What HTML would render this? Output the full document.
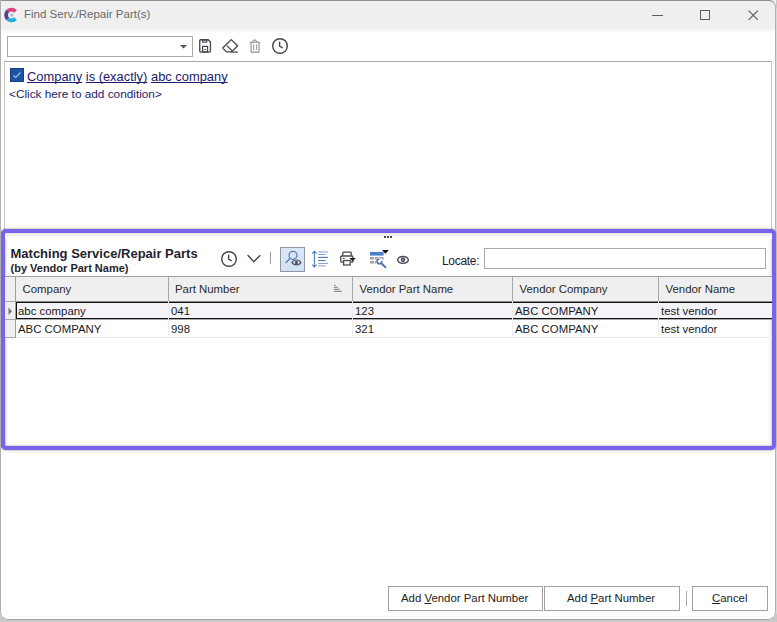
<!DOCTYPE html>
<html><head><meta charset="utf-8">
<style>
*{margin:0;padding:0;box-sizing:border-box}
html,body{width:777px;height:622px;overflow:hidden;background:#c9c9c9;font-family:"Liberation Sans",sans-serif;}
.a{position:absolute}
#win{position:absolute;left:0;top:0;width:777px;height:622px;overflow:hidden}
#frame{position:absolute;left:0;top:0;width:776px;height:620px;background:#fff;border-radius:0 7px 8px 8px}
#frameb{position:absolute;left:0;top:0;width:776px;height:620px;border:1px solid #b0b0b0;border-top-color:#8c8c8c;border-bottom-color:#a6a6a6;border-radius:0 7px 8px 8px;z-index:50;pointer-events:none}
#title{left:0;top:0;width:776px;height:30px;background:#efefef}
.txt{white-space:nowrap;line-height:1}
</style></head><body>
<div id="win">
  <div class="a" style="left:776px;top:8px;width:1px;height:606px;background:#dadada"></div>
  <div id="frame"></div>
  <div id="frameb"></div>
  <div class="a" id="title"></div>
  <div class="a" style="left:0;top:28px;width:776px;height:5px;background:linear-gradient(#efefef,#fff)"></div>
  <!-- logo -->
  <svg class="a" style="left:0;top:0" width="24" height="30" viewBox="0 0 24 30">
    <path d="M15.51 11.39 A5.4 5.4 0 0 0 7.68 11.18" fill="none" stroke="#dc3f7c" stroke-width="3.8"/>
    <path d="M7.68 11.18 A5.4 5.4 0 0 0 7.68 18.82" fill="none" stroke="#5a3e96" stroke-width="3.8"/>
    <path d="M7.68 18.82 A5.4 5.4 0 0 0 15.51 18.61" fill="none" stroke="#22b0d8" stroke-width="3.8"/>
    <circle cx="11.8" cy="15" r="1.6" fill="#b0b0b8"/>
  </svg>
  <div class="a txt" style="left:24px;top:8.5px;font-size:11.5px;color:#6a6a6a">Find Serv./Repair Part(s)</div>
  <!-- window controls -->
  <div class="a" style="left:652px;top:15px;width:11px;height:1px;background:#5e5e5e"></div>
  <div class="a" style="left:700px;top:10px;width:10px;height:10px;border:1px solid #5e5e5e"></div>
  <svg class="a" style="left:747px;top:9px" width="12" height="12" viewBox="0 0 12 12"><path d="M1.6 1.6L10.9 10.9M10.9 1.6L1.6 10.9" stroke="#5e5e5e" stroke-width="1.25"/></svg>

  <!-- toolbar -->
  <div class="a" style="left:7px;top:36px;width:186px;height:21px;border:1px solid #a9a9a9;background:#fff"></div>
  <svg class="a" style="left:180px;top:45px" width="8" height="4"><path d="M0 0H7L3.5 3.5Z" fill="#555"/></svg>
  <!-- save -->
  <svg class="a" style="left:198px;top:38px" width="14" height="16" viewBox="0 0 14 16">
    <path d="M2.8 1.75H10.2L12.45 4V12.9Q12.45 14.05 11.3 14.05H2.9Q1.75 14.05 1.75 12.9V2.8Q1.75 1.75 2.8 1.75Z" fill="none" stroke="#44424e" stroke-width="1.3"/>
    <rect x="4.6" y="2" width="4.2" height="2.1" fill="none" stroke="#44424e" stroke-width="1.1"/>
    <rect x="4.6" y="8.4" width="5" height="5.4" fill="none" stroke="#44424e" stroke-width="1.2"/>
    <rect x="6.3" y="10.9" width="1.6" height="1.1" fill="#44424e"/>
  </svg>
  <!-- eraser -->
  <svg class="a" style="left:220px;top:37px" width="20" height="18" viewBox="0 0 20 18">
    <path d="M11.3 2.6L17.6 8.8L11.6 14.9H6.6L2.7 11Z" fill="none" stroke="#44424e" stroke-width="1.3" stroke-linejoin="round"/>
    <path d="M6.8 8.6L12.3 13.9" stroke="#44424e" stroke-width="1.3"/>
    <path d="M11.4 15.1H17.9" stroke="#44424e" stroke-width="1.2"/>
  </svg>
  <!-- trash -->
  <svg class="a" style="left:249px;top:38px" width="13" height="16" viewBox="0 0 13 16">
    <path d="M0.8 4.3H11.2M3 4.1L5.6 1.8L8.6 4.1" fill="none" stroke="#a4a4a4" stroke-width="1.3"/>
    <path d="M2.1 4.5V13.4Q2.1 14.3 3 14.3H9.2Q10.1 14.3 10.1 13.4V4.5" fill="none" stroke="#a4a4a4" stroke-width="1.4"/>
    <path d="M4.6 6.3V12M7.6 6.3V12" stroke="#a4a4a4" stroke-width="1.2"/>
  </svg>
  <!-- clock -->
  <svg class="a" style="left:271px;top:37px" width="18" height="18" viewBox="0 0 18 18">
    <circle cx="9" cy="9" r="7.3" fill="none" stroke="#45434f" stroke-width="1.4"/>
    <path d="M8.6 4.8V9.2L11.8 11" fill="none" stroke="#45434f" stroke-width="1.4"/>
  </svg>

  <!-- filter panel -->
  <div class="a" style="left:4px;top:61px;width:768px;height:180px;border-top:1px solid #a8a8a8;border-left:1px solid #c6c6c6;border-right:1px solid #c6c6c6"></div>
  <div class="a" style="left:10px;top:68px;width:14px;height:14px;background:#1d54a3;border:1px solid #183f80"></div>
  <svg class="a" style="left:10px;top:68px" width="14" height="14" viewBox="0 0 14 14"><path d="M3.4 7.4L5.7 9.4L10.4 4.5" fill="none" stroke="#9ccbf6" stroke-width="1.1"/></svg>
  <div class="a txt" style="left:27px;top:70.5px;font-size:12.9px;color:#1c1b6a;text-decoration-skip-ink:none">
    <span style="text-decoration:underline;text-decoration-skip-ink:none">Company</span> <span style="text-decoration:underline;text-decoration-skip-ink:none">is (exactly)</span> <span style="text-decoration:underline;text-decoration-skip-ink:none">abc company</span>
  </div>
  <div class="a txt" style="left:9px;top:88.6px;font-size:11.8px;color:#1c1b6a">&lt;Click here to add condition&gt;</div>

  <!-- purple panel -->
  <div class="a" style="left:1px;top:229px;width:775px;height:221px;border:4px solid #7664ed;border-radius:5px;background:#fff;box-shadow:0 0 0 1px rgba(80,80,40,.12), 0 0 4px rgba(70,70,20,.25), inset 0 0 0 1px rgba(80,80,40,.1), inset 0 0 4px rgba(60,60,0,.22)"></div>
  <div class="a" style="left:1px;top:229px;width:775px;height:221px;border:4px solid #7664ed;border-radius:5px;z-index:60"></div>
  <div class="a" style="left:5px;top:233px;width:767px;height:6px;background:linear-gradient(#e6e6e2,#fbfbfb 70%,#fff)"></div>
  <div class="a" style="left:384px;top:236px;width:2px;height:2px;background:#4a4a4a"></div>
  <div class="a" style="left:387px;top:236px;width:2px;height:2px;background:#4a4a4a"></div>
  <div class="a" style="left:390px;top:236px;width:2px;height:2px;background:#4a4a4a"></div>

  <div class="a txt" style="left:10.5px;top:247px;font-size:13px;font-weight:bold;color:#1f1f2a">Matching Service/Repair Parts</div>
  <div class="a txt" style="left:10.5px;top:263px;font-size:11px;font-weight:bold;color:#1f1f2a">(by Vendor Part Name)</div>

  <!-- grid toolbar -->
  <svg class="a" style="left:220px;top:250px" width="18" height="18" viewBox="0 0 18 18">
    <circle cx="9" cy="9" r="7.3" fill="none" stroke="#45434f" stroke-width="1.4"/>
    <path d="M8.6 4.8V9.2L11.8 11" fill="none" stroke="#45434f" stroke-width="1.4"/>
  </svg>
  <svg class="a" style="left:246px;top:253px" width="16" height="11" viewBox="0 0 16 11"><path d="M1.6 2.1L7.8 8.7L14.3 2.3" fill="none" stroke="#45434f" stroke-width="1.4"/></svg>
  <div class="a" style="left:270px;top:252px;width:1px;height:12px;background:#999"></div>
  <div class="a" style="left:280px;top:247px;width:25px;height:25px;background:linear-gradient(#d9e7f7,#d2e2f5);border:1px solid #8f96a2"></div>
  <svg class="a" style="left:281px;top:248px" width="23" height="23" viewBox="0 0 23 23">
    <circle cx="12" cy="7.3" r="4" fill="none" stroke="#5a7db0" stroke-width="1.2"/>
    <path d="M9.1 10.2L4.6 15" stroke="#5a7db0" stroke-width="1.4"/>
    <path d="M11 14.4C12.5 11.2 18.3 11.2 19.8 14.4C18.3 17.6 12.5 17.6 11 14.4Z" fill="#d4e3f5" stroke="#505058" stroke-width="1.2"/>
    <circle cx="15.4" cy="14.4" r="1.5" fill="#44444c"/>
  </svg>
  <!-- line spacing -->
  <svg class="a" style="left:308px;top:246px" width="24" height="24" viewBox="0 0 24 24">
    <path d="M6.4 5.6V20.6M4.2 7.5L6.4 5.3L8.6 7.5M4.2 18.7L6.4 20.9L8.6 18.7" fill="none" stroke="#5a7fb8" stroke-width="1.1"/>
    <path d="M10.2 6H20M10.2 8.5H17.5M10.2 11.4H20M10.2 14.5H17.5M10.2 17.4H20M10.2 19.9H17.5" stroke="#7d9fcf" stroke-width="1"/>
    <path d="M10.2 11.4H20M10.2 14.5H17.5" stroke="#5577aa" stroke-width="1"/>
  </svg>
  <!-- printer -->
  <svg class="a" style="left:336px;top:246px" width="24" height="24" viewBox="0 0 24 24">
    <path d="M6.8 9.8V7Q6.8 6.2 7.6 6.2H14.4Q15.2 6.2 15.2 7V9.8" fill="none" stroke="#4a4a52" stroke-width="1.3"/>
    <path d="M7.2 16.2H5.6Q4.8 16.2 4.8 15.4V10.9Q4.8 10 5.7 10H16Q16.9 10 16.9 10.9V15.4Q16.9 16.2 16.1 16.2H14.6" fill="none" stroke="#4a4a52" stroke-width="1.3"/>
    <rect x="7.6" y="14.5" width="6.6" height="4.5" fill="#fff" stroke="#4a4a52" stroke-width="1.3"/>
    <path d="M7 12.4H8.8" stroke="#4a4a52" stroke-width="1"/>
    <path d="M13.2 12.1H19.9L16.5 15.3Z" fill="#222"/>
  </svg>
  <!-- grid wrench -->
  <svg class="a" style="left:366px;top:246px" width="26" height="26" viewBox="0 0 26 26">
    <rect x="4" y="6" width="13.6" height="3.6" fill="#4a80c8"/>
    <rect x="4" y="11" width="4.2" height="2.6" fill="#a4a4a8"/>
    <rect x="9" y="11" width="3.6" height="2.6" fill="#a4a4a8"/>
    <rect x="13.4" y="11" width="4.2" height="2.6" fill="#a4a4a8"/>
    <rect x="4" y="15" width="4.2" height="2.6" fill="#a4a4a8"/>
    <rect x="9" y="15" width="1" height="2.6" fill="#a4a4a8"/>
    <path d="M16 4H22.8L19.4 7.7Z" fill="#111"/>
    <circle cx="13.4" cy="15.4" r="3.4" fill="#fff"/>
    <path d="M13.61 13.01A2.4 2.4 0 1 0 15.72 14.78" fill="none" stroke="#5272aa" stroke-width="1.7"/>
    <path d="M15.3 17.3L19.4 21.3" stroke="#5272aa" stroke-width="1.9" stroke-linecap="round"/>
  </svg>
  <!-- eye -->
  <svg class="a" style="left:392px;top:250px" width="22" height="20" viewBox="0 0 22 20">
    <path d="M5.6 9.8C6.6 5.3 15.4 5.3 16.4 9.8C15.4 14.3 6.6 14.3 5.6 9.8Z" fill="none" stroke="#4c4c56" stroke-width="1.4"/>
    <circle cx="11" cy="9.8" r="1.7" fill="#88888f" stroke="#4c4c56" stroke-width="1.2"/>
  </svg>

  <div class="a txt" style="left:442px;top:255px;font-size:12px;letter-spacing:-0.3px;color:#222">Locate:</div>
  <div class="a" style="left:484px;top:248px;width:282px;height:21px;border:1px solid #a9a9a9;background:#fff"></div>

  <!-- grid -->
  <div class="a" style="left:5px;top:276px;width:767px;height:1px;background:#a0a0a0"></div>
  <div class="a" style="left:5px;top:277px;width:767px;height:25px;background:#efefef"></div>
  <div class="a" style="left:15px;top:277px;width:1px;height:60px;background:#a0a0a0"></div>
  <div class="a" style="left:168px;top:277px;width:1px;height:25px;background:#a8a8a8"></div>
  <div class="a" style="left:352px;top:277px;width:1px;height:25px;background:#a8a8a8"></div>
  <div class="a" style="left:512px;top:277px;width:1px;height:25px;background:#a8a8a8"></div>
  <div class="a" style="left:658px;top:277px;width:1px;height:25px;background:#a8a8a8"></div>

  <div class="a txt" style="left:22.5px;top:284px;font-size:11.4px;color:#2a2a2a">Company</div>
  <div class="a txt" style="left:175px;top:284px;font-size:11.4px;color:#2a2a2a">Part Number</div>
  <svg class="a" style="left:333px;top:284px" width="10" height="9" viewBox="0 0 10 9"><path d="M1 1.3H2.6M1 3.3H4.6M1 5.3H6.6M1 7.3H9" stroke="#6a6a6a" stroke-width="0.9"/></svg>
  <div class="a txt" style="left:359.5px;top:284px;font-size:11.4px;color:#2a2a2a">Vendor Part Name</div>
  <div class="a txt" style="left:519.5px;top:284px;font-size:11.4px;color:#2a2a2a">Vendor Company</div>
  <div class="a txt" style="left:665.5px;top:284px;font-size:11.4px;color:#2a2a2a">Vendor Name</div>

  <!-- rows -->
  <div class="a" style="left:5px;top:302px;width:10px;height:35px;background:#efefef"></div>
  <div class="a" style="left:5px;top:301px;width:10px;height:1px;background:#a8a8a8"></div>
  <div class="a" style="left:5px;top:319px;width:10px;height:1px;background:#a8a8a8"></div>
  <div class="a" style="left:5px;top:337px;width:11px;height:1px;background:#a8a8a8"></div>
  <svg class="a" style="left:8px;top:307px" width="5" height="9"><path d="M0.5 0.5L4 4.25L0.5 8Z" fill="#777"/></svg>
  <div class="a" style="left:16px;top:303px;width:756px;height:15px;background:#f4f4f8"></div>
  <div class="a" style="left:16px;top:302px;width:756px;height:1px;background:#111"></div>
  <div class="a" style="left:16px;top:318px;width:756px;height:1px;background:#111"></div>
  <div class="a" style="left:16px;top:303px;width:1px;height:15px;background:#111"></div>
  <div class="a" style="left:16px;top:301px;width:756px;height:1px;background:#888"></div>
  <div class="a" style="left:16px;top:319px;width:756px;height:1px;background:#aaa"></div>
  <div class="a" style="left:16px;top:337px;width:756px;height:1px;background:#ececec"></div>
  <div class="a" style="left:168px;top:301px;width:1px;height:35px;background:#ececec"></div>
  <div class="a" style="left:352px;top:301px;width:1px;height:35px;background:#ececec"></div>
  <div class="a" style="left:512px;top:301px;width:1px;height:35px;background:#ececec"></div>
  <div class="a" style="left:658px;top:301px;width:1px;height:35px;background:#ececec"></div>

  <div class="a txt" style="left:18px;top:306px;font-size:11.4px;color:#1a1a1a">abc company</div>
  <div class="a txt" style="left:171px;top:306px;font-size:11.4px;color:#1a1a1a">041</div>
  <div class="a txt" style="left:355px;top:306px;font-size:11.4px;color:#1a1a1a">123</div>
  <div class="a txt" style="left:515px;top:306px;font-size:11.4px;color:#1a1a1a">ABC COMPANY</div>
  <div class="a txt" style="left:661px;top:306px;font-size:11.4px;color:#1a1a1a">test vendor</div>

  <div class="a txt" style="left:18px;top:324px;font-size:11.4px;color:#1a1a1a">ABC COMPANY</div>
  <div class="a txt" style="left:171px;top:324px;font-size:11.4px;color:#1a1a1a">998</div>
  <div class="a txt" style="left:355px;top:324px;font-size:11.4px;color:#1a1a1a">321</div>
  <div class="a txt" style="left:515px;top:324px;font-size:11.4px;color:#1a1a1a">ABC COMPANY</div>
  <div class="a txt" style="left:661px;top:324px;font-size:11.4px;color:#1a1a1a">test vendor</div>

  <!-- buttons -->
  <div class="a" style="left:8px;top:616px;width:760px;height:1px;background:#f6f6f6"></div>
  <div class="a" style="left:388px;top:586px;width:155px;height:25px;border:1px solid #a0a0a0;background:#fff"></div>
  <div class="a txt" style="left:401px;top:593px;font-size:11.4px;color:#222">Add <u>V</u>endor Part Number</div>
  <div class="a" style="left:544px;top:586px;width:136px;height:25px;border:1px solid #a0a0a0;background:#fff"></div>
  <div class="a txt" style="left:567px;top:593px;font-size:11.4px;color:#222">Add <u>P</u>art Number</div>
  <div class="a" style="left:686px;top:591px;width:1px;height:15px;background:#aaa"></div>
  <div class="a" style="left:692px;top:586px;width:76px;height:25px;border:1px solid #a0a0a0;background:#fff"></div>
  <div class="a txt" style="left:712px;top:593px;font-size:11.4px;color:#222"><u>C</u>ancel</div>
</div>
</body></html>
